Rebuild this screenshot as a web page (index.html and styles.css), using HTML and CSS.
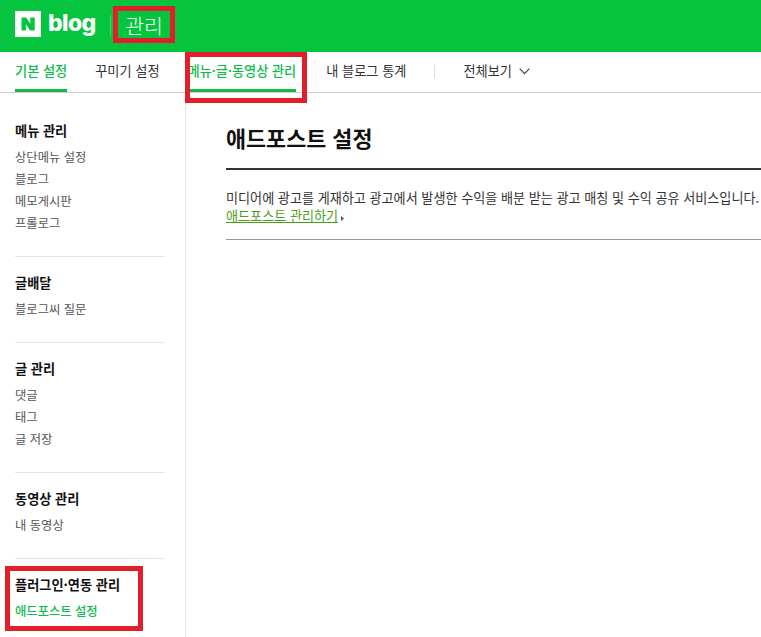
FILE: index.html
```html
<!DOCTYPE html>
<html lang="ko">
<head>
<meta charset="utf-8">
<title>관리</title>
<link rel="stylesheet" href="styles.css">
</head>
<body>
<header class="top">
  <div class="logo">
    <svg class="logo-n" viewBox="0 0 26 26" width="26" height="26"><rect width="26" height="26" fill="#fff"/><path d="M6.500 6.500h4.600l4.200 6.200V6.500h4.400v13h-4.600l-4.200-6.200v6.200H6.500z" fill="#05c53f"/></svg>
    <span class="logo-blog">blog</span>
  </div>
  <span class="top-sep"></span>
  <span class="top-title">관리</span>
</header>
<nav class="tabs">
  <a class="tab on">기본 설정</a>
  <a class="tab">꾸미기 설정</a>
  <a class="tab on tab-menu">메뉴·글·동영상 관리</a>
  <a class="tab tab-stat">내 블로그 통계</a>
  <span class="tab-sep"></span>
  <a class="tab tab-all">전체보기
    <svg class="chev" viewBox="0 0 11 7" width="11" height="7"><path d="M.7.700l4.800 5 4.800-5" fill="none" stroke="#444" stroke-width="1.200"/></svg>
  </a>
</nav>
<div class="body">
  <aside class="side">
    <section class="group g1">
      <h3>메뉴 관리</h3>
      <ul><li>상단메뉴 설정</li><li>블로그</li><li>메모게시판</li><li>프롤로그</li></ul>
    </section>
    <section class="group g2">
      <h3>글배달</h3>
      <ul><li>블로그씨 질문</li></ul>
    </section>
    <section class="group g3">
      <h3>글 관리</h3>
      <ul><li>댓글</li><li>태그</li><li>글 저장</li></ul>
    </section>
    <section class="group g4">
      <h3>동영상 관리</h3>
      <ul><li>내 동영상</li></ul>
    </section>
    <section class="group last">
      <h3>플러그인·연동 관리</h3>
      <ul><li class="cur">애드포스트 설정</li></ul>
    </section>
  </aside>
  <main class="main">
    <h2>애드포스트 설정</h2>
    <div class="desc">
      <p>미디어에 광고를 게재하고 광고에서 발생한 수익을 배분 받는 광고 매칭 및 수익 공유 서비스입니다.</p>
      <p class="more"><a>애드포스트 관리하기</a><svg class="tri" viewBox="0 0 3 5" width="3" height="5"><path d="M0 0l3 2.500L0 5z" fill="#555"/></svg></p>
    </div>
  </main>
</div>
<div class="mark m1"></div>
<div class="mark m2"></div>
<div class="mark m3"></div>
</body>
</html>
```

FILE: styles.css
```css
* { box-sizing: border-box; }
html, body { margin: 0; padding: 0; }
body {
  width: 761px;
  height: 637px;
  overflow: hidden;
  position: relative;
  background: #fff;
  font-family: "Noto Sans CJK KR", "Liberation Sans", sans-serif;
  color: #333;
}
.top {
  height: 52px;
  background: #05c53f;
  display: flex;
  align-items: center;
  padding: 0 0 4px 15px;
  color: #fff;
}
.logo { display: flex; align-items: center; gap: 7px; }
.logo-n { display: block; }
.logo-blog {
  font-family: "Inter", "Liberation Sans", sans-serif;
  font-weight: 800;
  font-size: 23px;
  letter-spacing: -0.6px;
  line-height: 26px;
  position: relative;
  top: -1px;
}
.top-sep { width: 1px; height: 21px; background: #3ad56a; margin: 2px 0 0 14px; }
.top-title { font-size: 20.500px; margin: 1px 0 0 14.500px; line-height: 26px; font-weight: 300; }
.tabs {
  height: 41px;
  border-bottom: 1px solid #ccc;
  display: flex;
  align-items: stretch;
  padding-left: 15px;
  font-size: 13.200px;
}
.tab {
  display: flex;
  align-items: center;
  gap: 7px;
  height: 40px;
  padding-bottom: 3px;
  margin-right: 28px;
  color: #333;
  white-space: nowrap;
}
.tab.on {
  color: #0cbd4c;
  font-weight: 500;
  border-bottom: 3px solid #17b74a;
  padding-bottom: 0;
}
.tab-menu { margin-right: 30px; }
.tab-stat { margin-right: 28px; }
.tab-sep { width: 1px; height: 13px; background: #ddd; margin: 13px 28px 0 0; }
.chev { margin-top: 2px; }
.body { display: flex; height: 545px; }
.side {
  width: 186px;
  border-right: 1px solid #e5e5e5;
  padding: 27px 20px 0 15px;
  flex: none;
}
.group { border-bottom: 1px solid #e5e5e5; }
.g1 { height: 137px; }
.g2 { height: 86px; }
.g3 { height: 130px; }
.g4 { height: 86px; }
.last { border-bottom: 0; }
.group h3 {
  margin: 0;
  font-size: 13.200px;
  line-height: 22px;
  font-weight: 700;
  color: #111;
}
.g2 h3, .g3 h3, .g4 h3, .last h3 { padding-top: 15px; }
.group ul { list-style: none; margin: 4px 0 0; padding: 0; }
.group li { font-size: 12.300px; line-height: 22px; color: #555; }
.group li.cur { color: #0cbd4c; font-weight: 500; }
.main { flex: 1; min-width: 0; padding: 29px 0 0 40px; overflow: hidden; }
.main h2 {
  margin: 0;
  font-size: 21.800px;
  line-height: 32px;
  font-weight: 700;
  color: #111;
  height: 48px;
  border-bottom: 2px solid #333;
  width: 560px;
}
.desc { width: 560px; height: 70px; border-bottom: 1px solid #999; padding-top: 19px; }
.desc p { margin: 0; font-size: 13.100px; line-height: 18px; color: #333; white-space: nowrap; }
.more a { color: #4b9e1c; text-decoration: underline; }
.tri { margin-left: 3px; }
.mark { position: absolute; border: 5px solid #e01f2b; }
.m1 { left: 113px; top: 6px; width: 62px; height: 37px; }
.m2 { left: 185px; top: 52px; width: 122px; height: 51px; }
.m3 { left: 5px; top: 566px; width: 138px; height: 65px; }
```
